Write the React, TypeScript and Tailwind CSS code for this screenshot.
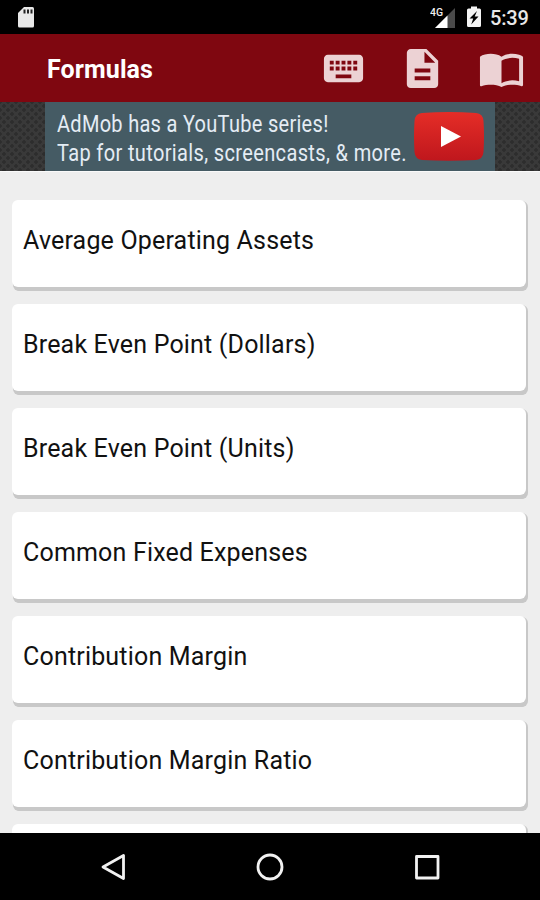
const formulas = [
  'Average Operating Assets',
  'Break Even Point (Dollars)',
  'Break Even Point (Units)',
  'Common Fixed Expenses',
  'Contribution Margin',
  'Contribution Margin Ratio',
  '',
];

function StatusBar() {
  return (
    <div className="flex h-[34px] shrink-0 items-center bg-black pl-[18px] pr-[11px]">
      <svg width="17" height="21" viewBox="0 0 17 21" className="mt-px">
        <path d="M6 0H14.5Q16 0 16 1.5V19Q16 20.5 14.500 20.500H1.500Q0 20.500 0 19V6Z" fill="#e8e8e8" />
        <path d="M5.500 2.500h2v4h-2zM9 2.500h2v4H9zM12.500 2.500h2v4h-2z" fill="#222" />
      </svg>
      <div className="ml-auto flex items-center">
        <svg width="26" height="22" viewBox="0 0 26 22">
          <path d="M25 2V22H5Z" fill="#4a4a4a" />
          <path d="M17.500 9.500V22H5Z" fill="#fff" />
          <path d="M0 0H13.500V10.500H6L3 12H0Z" fill="#000" />
          <text x="0" y="10" fontFamily="Roboto, sans-serif" fontSize="11.500" fontWeight="500" textLength="13" lengthAdjust="spacingAndGlyphs" fill="#f0f0f0">4G</text>
        </svg>
        <svg width="14" height="22" viewBox="0 0 14 22" className="ml-[11px]">
          <path d="M4 0.500H10V2.500H12.500Q14 2.500 14 4V19.500Q14 21 12.500 21H1.500Q0 21 0 19.500V4Q0 2.500 1.500 2.500H4Z" fill="#f4f4f4" />
          <path d="M10 5L2.500 12.500H6.200L4.200 18.500L11.500 10.500H7.700Z" fill="#000" />
        </svg>
        <span className="ml-[9px] w-[39px] whitespace-nowrap pt-[2px] text-[20px] leading-[24px] font-medium tracking-[-0.2px] text-[#e8e8e8]">5:39</span>
      </div>
    </div>
  );
}

function Header() {
  return (
    <header className="flex h-[68px] shrink-0 items-center bg-[#7f0710] pl-[47px] pr-[15px]">
      <h1 className="pt-[3px] text-[25px] leading-[30px] font-bold tracking-[0.1px] text-white">Formulas</h1>
      <div className="ml-auto flex gap-8">
        <svg width="47" height="47" viewBox="0 0 24 24" fill="#ecd2d4">
          <path d="M20 5H4c-1.100 0-1.990.9-1.990 2L2 17c0 1.100.9 2 2 2h16c1.100 0 2-.9 2-2V7c0-1.100-.9-2-2-2zm-9 3h2v2h-2V8zm0 3h2v2h-2v-2zM8 8h2v2H8V8zm0 3h2v2H8v-2zm-1 2H5v-2h2v2zm0-3H5V8h2v2zm9 7H8v-2h8v2zm0-4h-2v-2h2v2zm0-3h-2V8h2v2zm3 3h-2v-2h2v2zm0-3h-2V8h2v2z" />
        </svg>
        <svg width="47" height="47" viewBox="0 0 24 24" fill="#ecd2d4">
          <path d="M14 2H6c-1.100 0-1.990.9-1.990 2L4 20c0 1.100.890 2 1.990 2H18c1.100 0 2-.9 2-2V8l-6-6zm2 16H8v-2h8v2zm0-4H8v-2h8v2zm-3-5V3.500L18.500 9H13z" />
        </svg>
        <svg width="47" height="47" viewBox="0 0 24 24" fill="#ecd2d4">
          <path d="M21,5C19.890,4.650 18.670,4.500 17.500,4.500C15.550,4.500 13.450,4.900 12,6C10.550,4.900 8.450,4.500 6.500,4.500C4.550,4.500 2.450,4.900 1,6V20.650C1,20.900 1.250,21.050 1.500,21.050C1.600,21.050 1.650,21 1.750,21C3.100,20.500 5.050,20.300 6.500,20.300C8.450,20.300 10.550,20.600 12,21.500C13.350,20.650 15.800,20.300 17.500,20.300C19.150,20.300 20.850,20.500 22.250,21C22.350,21.050 22.400,21.050 22.500,21.050C22.750,21.050 23,20.850 23,20.600V6C22.400,5.550 21.750,5.250 21,5M21,18.500C19.900,18.150 18.700,18 17.500,18C15.800,18 13.350,18.650 12,19.500V8C13.350,7.150 15.800,6.500 17.500,6.500C18.700,6.500 19.900,6.650 21,7V18.500Z" />
        </svg>
      </div>
    </header>
  );
}

function AdBanner() {
  return (
    <div className="flex h-[69px] shrink-0 justify-center bg-[#393939] bg-[radial-gradient(circle,#2d2d2d_1.5px,transparent_2px),radial-gradient(circle,#2d2d2d_1.5px,transparent_2px)] bg-size-[8px_8px] bg-position-[0_0,4px_4px]">
      <div className="flex w-[450px] bg-[#455b64] pl-[12px]">
        <div className="w-[357px] pt-[8px] text-[23px] leading-[29px] text-[#e4ecf4]">
          <p className="w-max origin-left scale-x-[0.87] tracking-[0.33px] whitespace-nowrap">AdMob has a YouTube series!</p>
          <p className="w-max origin-left scale-x-[0.87] tracking-[0.41px] whitespace-nowrap">Tap for tutorials, screencasts, &amp; more.</p>
        </div>
        <svg width="70" height="49" viewBox="0 0 70 49" className="mt-[10px]">
          <defs>
            <linearGradient id="play" x1="0" y1="0" x2="0" y2="1">
              <stop offset="0" stopColor="#e52d27" />
              <stop offset="1" stopColor="#bf171d" />
            </linearGradient>
          </defs>
          <path d="M8 1Q35-1 62 1Q69 1.500 69.500 9Q70.500 24.500 69.500 40Q69 47 62 48Q35 49.500 8 48Q1 47 .5 40Q-.5 24.500 .5 9Q1 1.500 8 1Z" fill="url(#play)" />
          <path d="M27 14V35L47 24.500Z" fill="#fff" />
        </svg>
      </div>
    </div>
  );
}

function NavBar() {
  return (
    <nav className="flex h-[67px] shrink-0 items-center justify-between bg-black px-[97px]">
      <svg width="32" height="32" viewBox="0 0 32 32" fill="none" stroke="#f2f2f2" strokeWidth="2.800" strokeLinejoin="round">
        <path d="M6 16L26.500 4.500V27.500Z" />
      </svg>
      <svg width="32" height="32" viewBox="0 0 32 32" fill="none" stroke="#f2f2f2" strokeWidth="2.800">
        <circle cx="16" cy="16" r="12" />
      </svg>
      <svg width="32" height="32" viewBox="0 0 32 32" fill="none" stroke="#f2f2f2" strokeWidth="2.800" strokeLinejoin="round">
        <rect x="5.500" y="5.500" width="21.500" height="21.500" />
      </svg>
    </nav>
  );
}

export default function App() {
  return (
    <div className="flex h-[900px] w-[540px] flex-col overflow-hidden bg-[#eeeeee] font-['Roboto',sans-serif]">
      <StatusBar />
      <Header />
      <AdBanner />
      <main className="flex min-h-0 flex-1 flex-col gap-[17px] overflow-hidden border-t border-[#fafafa] pl-[12px] pr-[14px] pt-[28px]">
        {formulas.map((name, index) => (
          <div
            key={index}
            className="flex h-[87px] shrink-0 items-start rounded-[6px] bg-white pl-[11px] pt-[26px] text-[25px] leading-[30px] tracking-[0.18px] text-[#111] shadow-[1px_2px_0_#c8c8c8,1px_4px_0_#c8c8c8,2px_4px_0_#c8c8c8,2px_1px_0_#c8c8c8]"
          >
            {name}
          </div>
        ))}
      </main>
      <NavBar />
    </div>
  );
}
